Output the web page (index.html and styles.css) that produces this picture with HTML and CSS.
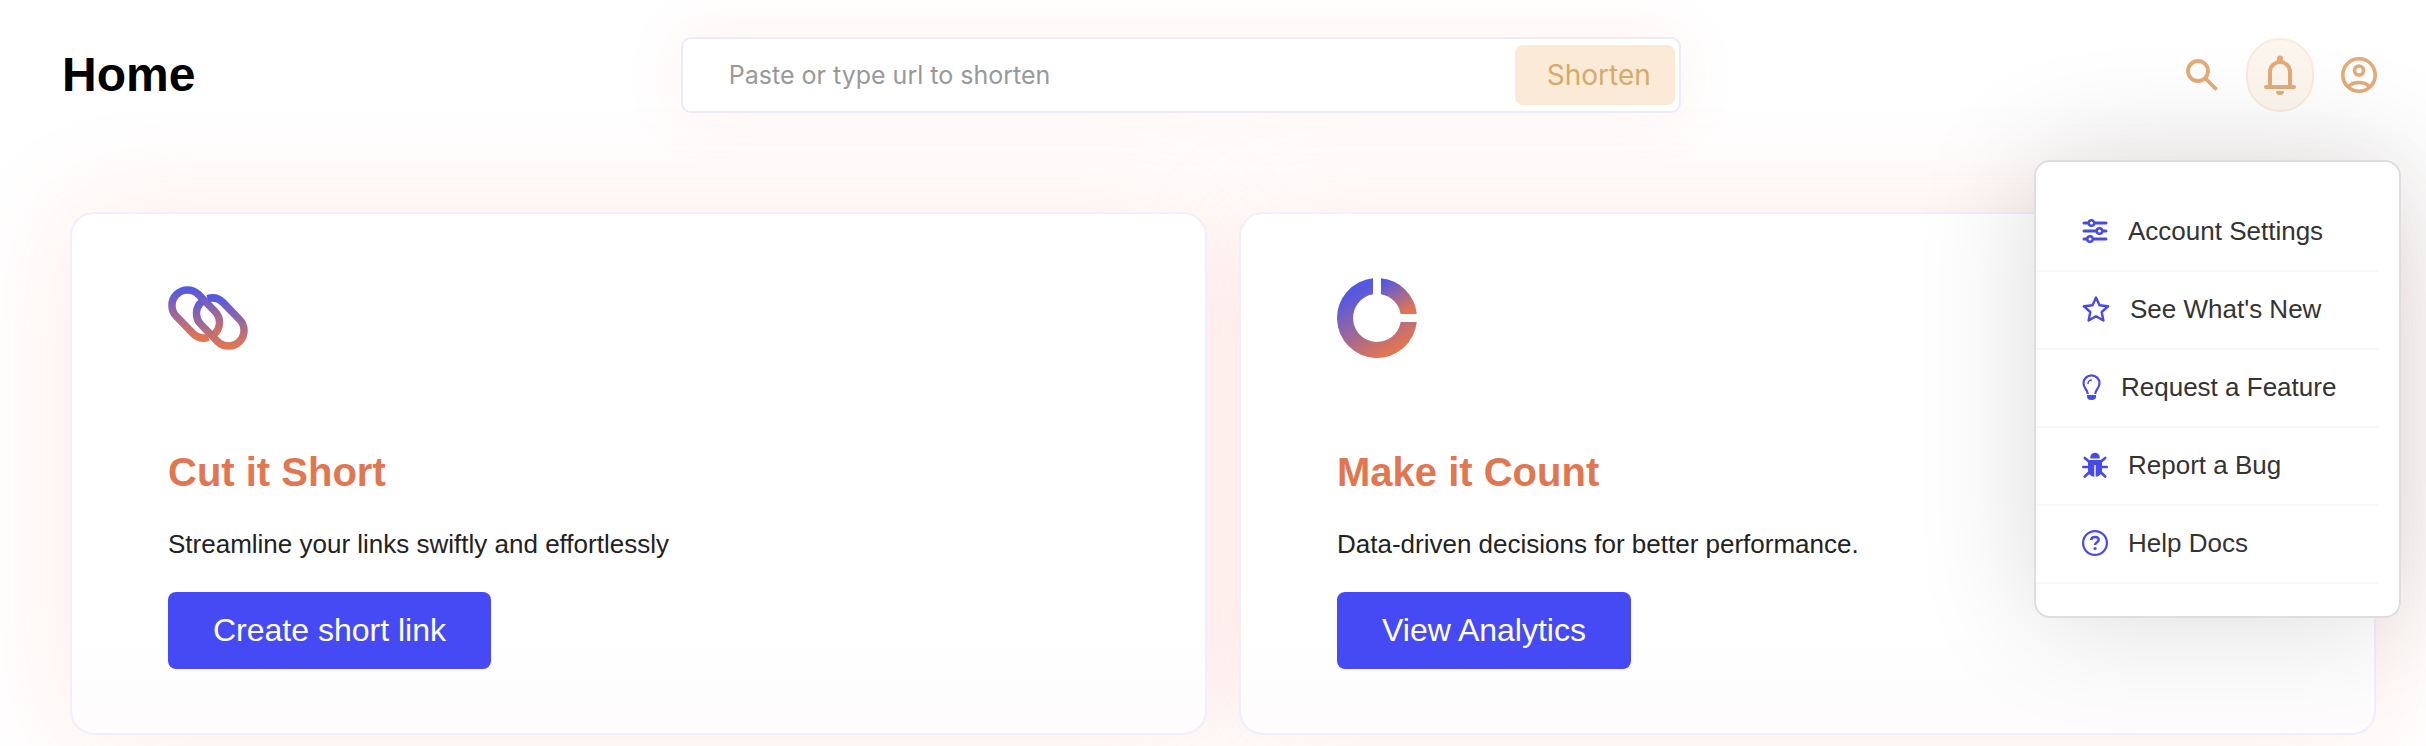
FILE: index.html
```html
<!DOCTYPE html>
<html lang="en">
<head>
<meta charset="utf-8">
<meta name="viewport" content="width=device-width, initial-scale=1">
<title>Home</title>
<link rel="stylesheet" href="styles.css">
</head>
<body>
<header class="topbar">
  <h1 class="page-title">Home</h1>
  <form class="shortener">
    <input class="shortener-input" type="text" aria-label="URL to shorten" placeholder="Paste or type url to shorten">
    <button class="shortener-submit" type="submit">Shorten</button>
  </form>
  <div class="actions">
    <button class="action" type="button" aria-label="Search">
      <svg class="icon-search" viewBox="0 0 34 34" fill="none" stroke="currentColor" stroke-width="3.800" stroke-linecap="round"><circle cx="13" cy="13" r="10"/><path d="M20.500 20.500 30.500 30.500"/></svg>
    </button>
    <button class="action action-active" type="button" aria-label="Notifications">
      <svg class="icon-bell" viewBox="0 0 32 40"><path d="M6 31V17a10 10 0 0 1 20 0v14" fill="none" stroke="currentColor" stroke-width="4"/><path d="M2 32h28" stroke="currentColor" stroke-width="4" stroke-linecap="round"/><path d="M13 7V3.500a3 3 0 0 1 6 0V7zM12 36h8a4 4 0 0 1-8 0z" fill="currentColor"/></svg>
    </button>
    <button class="action" type="button" aria-label="Account">
      <svg class="icon-user" viewBox="0 0 36 36" fill="none" stroke="currentColor" stroke-width="3.600"><circle cx="18" cy="18" r="16.200"/><circle cx="18" cy="13.500" r="4.500"/><path d="M7.500 29.500c5.500-5.300 15.500-5.300 21 0"/></svg>
    </button>
    <nav class="menu" aria-label="Account menu">
      <a class="menu-item" href="#settings">
        <svg class="menu-icon" viewBox="0 0 26 26" fill="none" stroke="currentColor" stroke-width="3" stroke-linecap="round"><path d="M2 5h4M13 5h11M2 13h12M21 13h3M2 21h3M12 21h12"/><g stroke-width="2.400"><circle cx="9.500" cy="5" r="2.800"/><circle cx="17.500" cy="13" r="2.800"/><circle cx="8" cy="21" r="2.800"/></g></svg>
        Account Settings</a>
      <a class="menu-item" href="#news">
        <svg class="menu-icon menu-icon-wide" viewBox="0 0 28 26" fill="none" stroke="currentColor" stroke-width="2.400" stroke-linejoin="round"><path d="M14 1.500l3.500 7.800 8.500 1-6.300 5.700 1.700 8.500-7.400-4.200-7.400 4.200 1.700-8.500L2 10.300l8.500-1z"/></svg>
        See What's New</a>
      <a class="menu-item" href="#feature">
        <svg class="menu-icon menu-icon-narrow" viewBox="0 0 19 26"><path d="M5.800 20C5.600 15.500 1.500 14 1.500 9.300a8 8 0 0 1 16 0c0 4.700-4.100 6.200-4.300 10.700" fill="none" stroke="currentColor" stroke-width="2.200"/><path d="M6 9.500A3.500 3.500 0 0 1 9.500 6" fill="none" stroke="currentColor" stroke-width="1.500" stroke-linecap="round"/><path d="M5 21h9v1.500a4.500 3.500 0 0 1-9 0z" fill="currentColor"/></svg>
        Request a Feature</a>
      <a class="menu-item" href="#bug">
        <svg class="menu-icon" viewBox="0 0 26 26"><path d="M8.300 6.400v-1a4.700 4.700 0 0 1 9.400 0v1z" fill="currentColor"/><path d="M6 8h14v10a6.500 6.500 0 0 1-6.300 6.700V13h-1.400v11.700A6.500 6.500 0 0 1 6 18z" fill="currentColor"/><path d="M2.800 6l4.700 4M23.200 6l-4.700 4M1.300 15H7M24.700 15H19M2.800 24.500l4.700-4.500M23.200 24.500L18.500 20" stroke="currentColor" stroke-width="2.600" stroke-linecap="round"/></svg>
        Report a Bug</a>
      <a class="menu-item" href="#docs">
        <svg class="menu-icon" viewBox="0 0 26 26" fill="none" stroke="currentColor" stroke-width="2.200"><circle cx="13" cy="13" r="11.900"/><path d="M9.300 10c0-4 7.400-4 7.400 0 0 2.400-3.700 2.300-3.700 5" stroke-width="2.400"/><circle cx="13" cy="18.500" r="1.600" fill="currentColor" stroke="none"/></svg>
        Help Docs</a>
    </nav>
  </div>
</header>
<main class="cards">
  <section class="card">
    <svg class="card-icon" viewBox="0 0 80 80" aria-hidden="true">
      <defs><linearGradient id="link-fade" x1="0" y1="0" x2="0" y2="1"><stop offset="0" stop-color="#5659e0"/><stop offset="1" stop-color="#e07553"/></linearGradient></defs>
      <g fill="none" stroke="url(#link-fade)" stroke-width="7.500">
        <path d="M40.500 59.300A15.500 15.500 0 0 1 25 55.500L8.500 38.500A15.500 15.500 0 0 1 30.500 16.500L47 33.500A15.500 15.500 0 0 1 46 56.300"/>
        <path d="M39.500 20.700A15.500 15.500 0 0 1 55 24.500L71.500 41.500A15.500 15.500 0 0 1 49.500 63.500L33 46.500A15.500 15.500 0 0 1 34 23.700"/>
      </g>
    </svg>
    <h2 class="card-title">Cut it Short</h2>
    <p class="card-text">Streamline your links swiftly and effortlessly</p>
    <button class="card-button" type="button">Create short link</button>
  </section>
  <section class="card">
    <svg class="card-icon" viewBox="0 0 80 80" aria-hidden="true">
      <defs>
        <linearGradient id="ring-large" x1="0.300" y1="0.150" x2="0.700" y2="0.900"><stop offset="0" stop-color="#5659e0"/><stop offset="1" stop-color="#e07553"/></linearGradient>
        <linearGradient id="ring-small" x1="0.150" y1="0.100" x2="0.700" y2="0.950"><stop offset="0" stop-color="#5659e0"/><stop offset="1" stop-color="#e07553"/></linearGradient>
      </defs>
      <path fill="url(#ring-large)" d="M36 0.200A40 40 0 1 0 79.800 44H63.700A24 24 0 1 1 36 16.300z"/>
      <path fill="url(#ring-small)" d="M44 0.200A40 40 0 0 1 79.800 36H63.700A24 24 0 0 0 44 16.300z"/>
    </svg>
    <h2 class="card-title">Make it Count</h2>
    <p class="card-text">Data-driven decisions for better performance.</p>
    <button class="card-button" type="button">View Analytics</button>
  </section>
</main>
</body>
</html>
```
FILE: styles.css
```css
* {
  box-sizing: border-box;
}

body {
  margin: 0;
  background: #fff;
  color: #222;
  font-family: "Liberation Sans", Arial, sans-serif;
  font-size: 26px;
  line-height: 32px;
  overflow: hidden;
}

button,
input {
  font-family: inherit;
  border: 0;
}

.topbar {
  display: grid;
  grid-template-columns: 8fr 1000px 9fr;
  align-items: center;
  padding: 37px 49px 0 62px;
  position: relative;
  z-index: 1;
}

.page-title {
  margin: 0;
  color: #000;
  font-size: 48px;
  line-height: 56px;
}

.shortener {
  display: flex;
  align-items: center;
  height: 76px;
  padding: 4px;
  background: #fff;
  border: 2px solid #ecebf8;
  border-radius: 10px;
  box-shadow: 0 0 60px rgba(242, 120, 100, 0.1);
}

.shortener-input {
  flex: 1;
  min-width: 0;
  padding: 0 42px;
  background: none;
  color: #222;
  font-family: Inter, sans-serif;
  font-size: 25px;
}

.shortener-input::placeholder {
  color: #999;
  opacity: 1;
}

.shortener-submit {
  height: 60px;
  padding: 0 24px 0 32px;
  background: #fbead6;
  border-radius: 8px;
  color: #d5aa6c;
  font-family: Inter, sans-serif;
  font-size: 28px;
}

.actions {
  display: flex;
  justify-content: flex-end;
  align-items: center;
  gap: 27px;
  color: #e4ab77;
  position: relative;
}

.action {
  display: flex;
  align-items: center;
  justify-content: center;
  padding: 0;
  background: none;
  color: inherit;
}

.action-active {
  width: 68px;
  height: 74px;
  background: #fdf6ef;
  border: 2px solid #faecdc;
  border-radius: 34px;
}

.icon-search {
  width: 34px;
}

.icon-bell {
  width: 32px;
}

.icon-user {
  width: 36px;
}

.menu {
  position: absolute;
  top: 122px;
  right: -24px;
  width: 367px;
  padding: 32px 20px 32px 0;
  background: #fff;
  border: 2px solid #dedee0;
  border-radius: 16px;
  box-shadow: 0 0 120px rgba(0, 0, 0, 0.15);
}

.menu-item {
  display: flex;
  align-items: center;
  gap: 20px;
  height: 78px;
  padding: 0 0 2px 46px;
  border-bottom: 2px solid #f7f7f8;
  color: #333;
  text-decoration: none;
}

.menu-icon {
  width: 26px;
  height: 26px;
  color: #474aeb;
}

.menu-icon-wide {
  width: 28px;
}

.menu-icon-narrow {
  width: 19px;
}

.cards {
  display: grid;
  grid-template-columns: 1fr 1fr;
  gap: 32px;
  padding: 99px 50px 12px 70px;
  isolation: isolate;
}

.card {
  display: flex;
  flex-direction: column;
  align-items: flex-start;
  padding: 64px 96px;
  background: linear-gradient(#fff 80%, #fefcfd);
  border: 2px solid #f1effc;
  border-radius: 24px;
  position: relative;
}

.card::before {
  content: "";
  position: absolute;
  inset: 0;
  z-index: -1;
  border-radius: 24px;
  box-shadow: 0 0 110px rgba(242, 120, 100, 0.17);
}

.card-icon {
  width: 80px;
  height: 80px;
}

.card-title {
  margin: 90px 0 32px;
  color: #e07751;
  font-size: 40px;
  line-height: 48px;
}

.card-text {
  margin: 0 0 32px;
}

.card-button {
  height: 77px;
  padding: 0 45px;
  background: #464af4;
  border-radius: 8px;
  color: #fff;
  font-size: 32px;
}
```
